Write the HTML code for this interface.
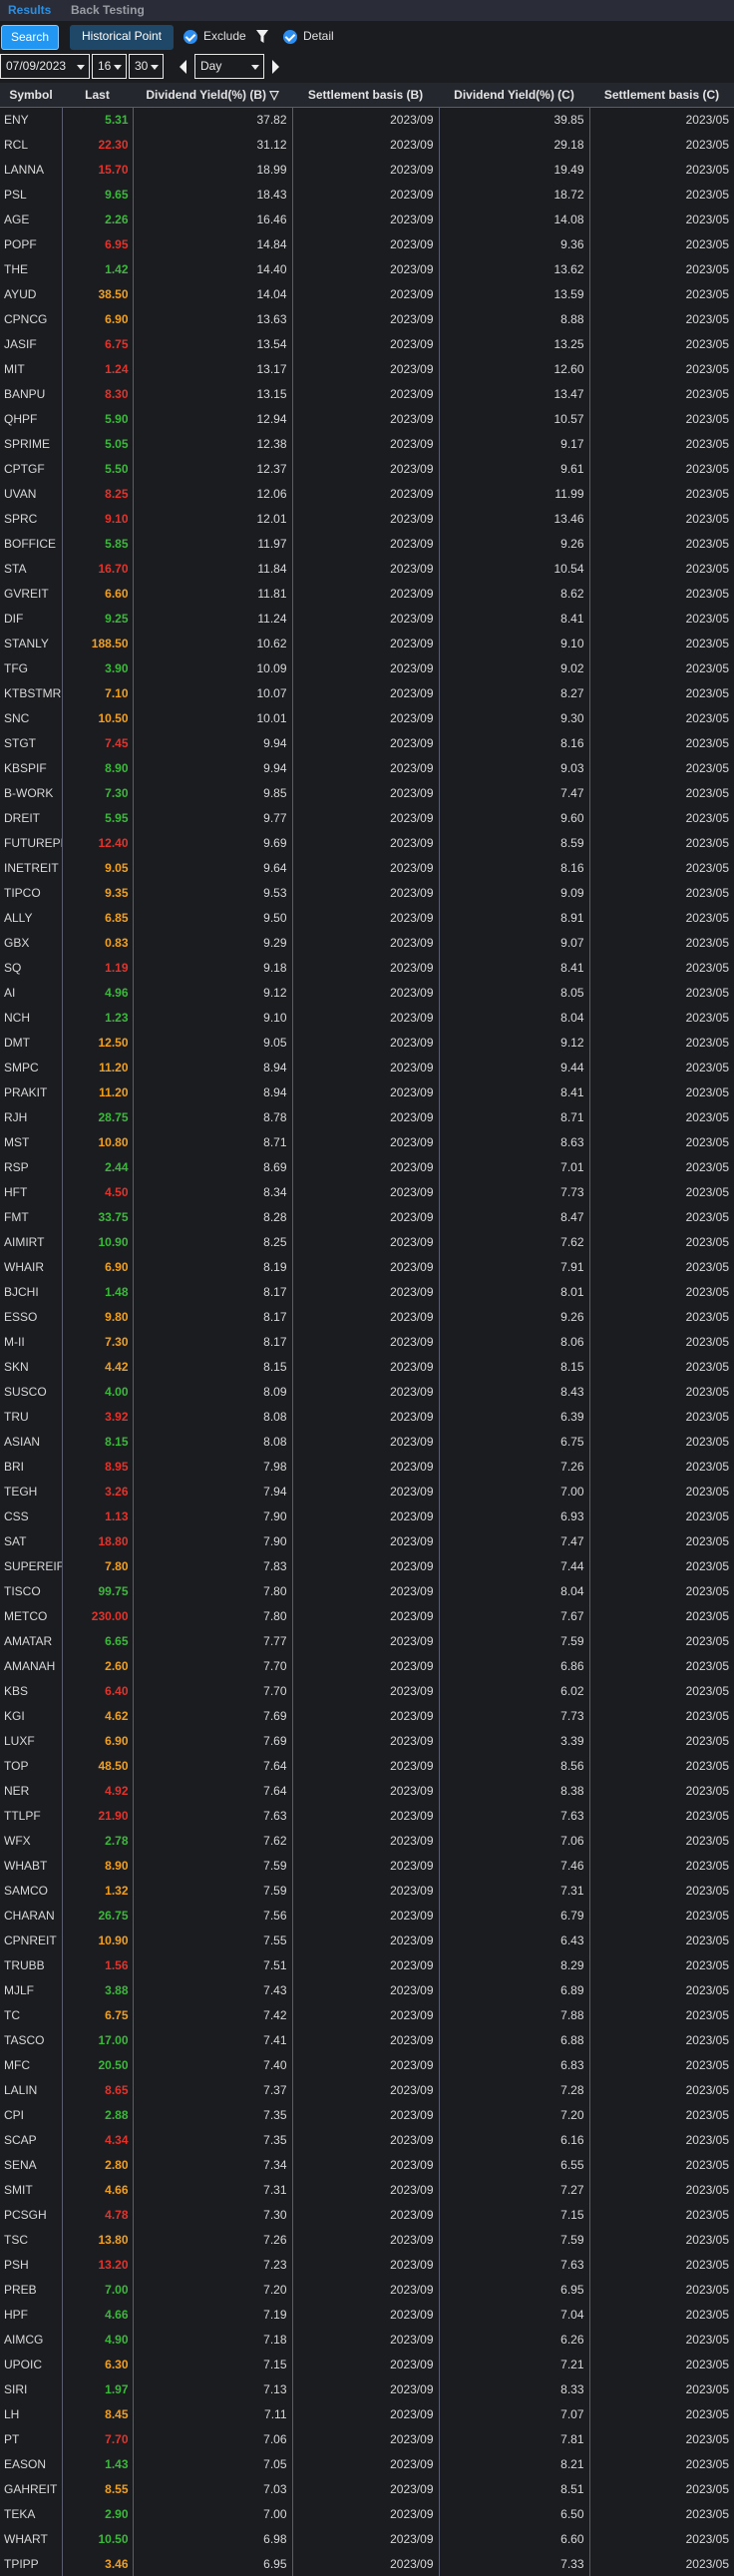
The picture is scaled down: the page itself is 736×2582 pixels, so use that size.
<!DOCTYPE html>
<html><head><meta charset="utf-8"><style>
*{margin:0;padding:0;box-sizing:border-box}
body{width:736px;height:2582px;background:#1b1c20;font-family:"Liberation Sans",sans-serif;color:#d8d8d8;overflow:hidden;position:relative}
.tabs{position:absolute;left:0;top:0;width:736px;height:21px;background:#2a2d38}
.tabs span{position:absolute;top:3px;font-size:12px;font-weight:bold}
.ctl{position:absolute;font-size:12px}
.btn{position:absolute;height:25px;line-height:23px;text-align:center;font-size:12px;color:#fff;border-radius:3px}
.chk{position:absolute;width:14px;height:14px;border-radius:50%;background:#2b8ef0}
.chk:after{content:"";position:absolute;left:4px;top:2px;width:4px;height:7px;border:solid #fff;border-width:0 2px 2px 0;transform:rotate(45deg)}
.sel{position:absolute;top:54px;height:25px;border:1px solid #e8e8e8;font-size:12px;line-height:23px;padding-left:5px;color:#e8e8e8}
.sel:after{content:"";position:absolute;right:4px;top:10px;border:4px solid transparent;border-top:5px solid #e8e8e8;border-bottom:0}
table{position:absolute;top:83px;left:0;width:736px;border-collapse:collapse;table-layout:fixed;font-size:12px}
th{height:24px;background:#25272e;color:#e4e4e4;font-weight:bold;text-align:center;white-space:nowrap;overflow:hidden}
td{height:25px;border-left:1px solid #5a5c70;text-align:right;padding-right:5px;white-space:nowrap;overflow:hidden}
td:first-child{border-left:0;text-align:left;padding-left:4px;padding-right:0}
tr.h+tr td{border-top:1px solid #5a5c70}
td:nth-child(2){font-weight:bold;padding-right:4px}
.g{color:#3cb83c}.r{color:#e0342c}.o{color:#f0a020}
</style></head><body>
<div class="tabs"><span style="left:8px;color:#2d8ee0">Results</span><span style="left:71px;color:#9a9ca4">Back Testing</span></div>
<div class="btn" style="left:1px;top:25px;width:58px;background:#2196f3;border:1px solid #8cc8ff">Search</div>
<div class="btn" style="left:70px;top:25px;width:104px;background:#1f4868">Historical Point</div>
<div class="chk" style="left:184px;top:30px"></div>
<div class="ctl" style="left:204px;top:29px;color:#e0e0e0">Exclude</div>
<svg style="position:absolute;left:257px;top:30px" width="12" height="14" viewBox="0 0 12 14"><path d="M0 0H12L7.5 6V13L4.5 11V6Z" fill="#f0f0f0"/></svg>
<div class="chk" style="left:284px;top:30px"></div>
<div class="ctl" style="left:304px;top:29px;color:#e0e0e0">Detail</div>
<div class="sel" style="left:0;width:90px">07/09/2023</div>
<div class="sel" style="left:92px;width:35px">16</div>
<div class="sel" style="left:129px;width:35px">30</div>
<svg style="position:absolute;left:180px;top:60px" width="8" height="14"><path d="M7 0V14L0 7Z" fill="#f0f0f0"/></svg>
<div class="sel" style="left:195px;width:70px">Day</div>
<svg style="position:absolute;left:273px;top:60px" width="8" height="14"><path d="M0 0V14L7 7Z" fill="#f0f0f0"/></svg>
<table>
<colgroup><col style="width:62px"><col style="width:71px"><col style="width:160px"><col style="width:147px"><col style="width:151px"><col style="width:145px"></colgroup>
<tr class="h"><th>Symbol</th><th>Last</th><th>Dividend Yield(%) (B) ▽</th><th>Settlement basis (B)</th><th>Dividend Yield(%) (C)</th><th>Settlement basis (C)</th></tr>
<tr><td>ENY</td><td class="g">5.31</td><td>37.82</td><td>2023/09</td><td>39.85</td><td>2023/05</td></tr>
<tr><td>RCL</td><td class="r">22.30</td><td>31.12</td><td>2023/09</td><td>29.18</td><td>2023/05</td></tr>
<tr><td>LANNA</td><td class="r">15.70</td><td>18.99</td><td>2023/09</td><td>19.49</td><td>2023/05</td></tr>
<tr><td>PSL</td><td class="g">9.65</td><td>18.43</td><td>2023/09</td><td>18.72</td><td>2023/05</td></tr>
<tr><td>AGE</td><td class="g">2.26</td><td>16.46</td><td>2023/09</td><td>14.08</td><td>2023/05</td></tr>
<tr><td>POPF</td><td class="r">6.95</td><td>14.84</td><td>2023/09</td><td>9.36</td><td>2023/05</td></tr>
<tr><td>THE</td><td class="g">1.42</td><td>14.40</td><td>2023/09</td><td>13.62</td><td>2023/05</td></tr>
<tr><td>AYUD</td><td class="o">38.50</td><td>14.04</td><td>2023/09</td><td>13.59</td><td>2023/05</td></tr>
<tr><td>CPNCG</td><td class="o">6.90</td><td>13.63</td><td>2023/09</td><td>8.88</td><td>2023/05</td></tr>
<tr><td>JASIF</td><td class="r">6.75</td><td>13.54</td><td>2023/09</td><td>13.25</td><td>2023/05</td></tr>
<tr><td>MIT</td><td class="r">1.24</td><td>13.17</td><td>2023/09</td><td>12.60</td><td>2023/05</td></tr>
<tr><td>BANPU</td><td class="r">8.30</td><td>13.15</td><td>2023/09</td><td>13.47</td><td>2023/05</td></tr>
<tr><td>QHPF</td><td class="g">5.90</td><td>12.94</td><td>2023/09</td><td>10.57</td><td>2023/05</td></tr>
<tr><td>SPRIME</td><td class="g">5.05</td><td>12.38</td><td>2023/09</td><td>9.17</td><td>2023/05</td></tr>
<tr><td>CPTGF</td><td class="g">5.50</td><td>12.37</td><td>2023/09</td><td>9.61</td><td>2023/05</td></tr>
<tr><td>UVAN</td><td class="r">8.25</td><td>12.06</td><td>2023/09</td><td>11.99</td><td>2023/05</td></tr>
<tr><td>SPRC</td><td class="r">9.10</td><td>12.01</td><td>2023/09</td><td>13.46</td><td>2023/05</td></tr>
<tr><td>BOFFICE</td><td class="g">5.85</td><td>11.97</td><td>2023/09</td><td>9.26</td><td>2023/05</td></tr>
<tr><td>STA</td><td class="r">16.70</td><td>11.84</td><td>2023/09</td><td>10.54</td><td>2023/05</td></tr>
<tr><td>GVREIT</td><td class="o">6.60</td><td>11.81</td><td>2023/09</td><td>8.62</td><td>2023/05</td></tr>
<tr><td>DIF</td><td class="g">9.25</td><td>11.24</td><td>2023/09</td><td>8.41</td><td>2023/05</td></tr>
<tr><td>STANLY</td><td class="o">188.50</td><td>10.62</td><td>2023/09</td><td>9.10</td><td>2023/05</td></tr>
<tr><td>TFG</td><td class="g">3.90</td><td>10.09</td><td>2023/09</td><td>9.02</td><td>2023/05</td></tr>
<tr><td>KTBSTMR</td><td class="o">7.10</td><td>10.07</td><td>2023/09</td><td>8.27</td><td>2023/05</td></tr>
<tr><td>SNC</td><td class="o">10.50</td><td>10.01</td><td>2023/09</td><td>9.30</td><td>2023/05</td></tr>
<tr><td>STGT</td><td class="r">7.45</td><td>9.94</td><td>2023/09</td><td>8.16</td><td>2023/05</td></tr>
<tr><td>KBSPIF</td><td class="g">8.90</td><td>9.94</td><td>2023/09</td><td>9.03</td><td>2023/05</td></tr>
<tr><td>B-WORK</td><td class="g">7.30</td><td>9.85</td><td>2023/09</td><td>7.47</td><td>2023/05</td></tr>
<tr><td>DREIT</td><td class="g">5.95</td><td>9.77</td><td>2023/09</td><td>9.60</td><td>2023/05</td></tr>
<tr><td>FUTUREPF</td><td class="r">12.40</td><td>9.69</td><td>2023/09</td><td>8.59</td><td>2023/05</td></tr>
<tr><td>INETREIT</td><td class="o">9.05</td><td>9.64</td><td>2023/09</td><td>8.16</td><td>2023/05</td></tr>
<tr><td>TIPCO</td><td class="o">9.35</td><td>9.53</td><td>2023/09</td><td>9.09</td><td>2023/05</td></tr>
<tr><td>ALLY</td><td class="o">6.85</td><td>9.50</td><td>2023/09</td><td>8.91</td><td>2023/05</td></tr>
<tr><td>GBX</td><td class="o">0.83</td><td>9.29</td><td>2023/09</td><td>9.07</td><td>2023/05</td></tr>
<tr><td>SQ</td><td class="r">1.19</td><td>9.18</td><td>2023/09</td><td>8.41</td><td>2023/05</td></tr>
<tr><td>AI</td><td class="g">4.96</td><td>9.12</td><td>2023/09</td><td>8.05</td><td>2023/05</td></tr>
<tr><td>NCH</td><td class="g">1.23</td><td>9.10</td><td>2023/09</td><td>8.04</td><td>2023/05</td></tr>
<tr><td>DMT</td><td class="o">12.50</td><td>9.05</td><td>2023/09</td><td>9.12</td><td>2023/05</td></tr>
<tr><td>SMPC</td><td class="o">11.20</td><td>8.94</td><td>2023/09</td><td>9.44</td><td>2023/05</td></tr>
<tr><td>PRAKIT</td><td class="o">11.20</td><td>8.94</td><td>2023/09</td><td>8.41</td><td>2023/05</td></tr>
<tr><td>RJH</td><td class="g">28.75</td><td>8.78</td><td>2023/09</td><td>8.71</td><td>2023/05</td></tr>
<tr><td>MST</td><td class="o">10.80</td><td>8.71</td><td>2023/09</td><td>8.63</td><td>2023/05</td></tr>
<tr><td>RSP</td><td class="g">2.44</td><td>8.69</td><td>2023/09</td><td>7.01</td><td>2023/05</td></tr>
<tr><td>HFT</td><td class="r">4.50</td><td>8.34</td><td>2023/09</td><td>7.73</td><td>2023/05</td></tr>
<tr><td>FMT</td><td class="g">33.75</td><td>8.28</td><td>2023/09</td><td>8.47</td><td>2023/05</td></tr>
<tr><td>AIMIRT</td><td class="g">10.90</td><td>8.25</td><td>2023/09</td><td>7.62</td><td>2023/05</td></tr>
<tr><td>WHAIR</td><td class="o">6.90</td><td>8.19</td><td>2023/09</td><td>7.91</td><td>2023/05</td></tr>
<tr><td>BJCHI</td><td class="g">1.48</td><td>8.17</td><td>2023/09</td><td>8.01</td><td>2023/05</td></tr>
<tr><td>ESSO</td><td class="o">9.80</td><td>8.17</td><td>2023/09</td><td>9.26</td><td>2023/05</td></tr>
<tr><td>M-II</td><td class="o">7.30</td><td>8.17</td><td>2023/09</td><td>8.06</td><td>2023/05</td></tr>
<tr><td>SKN</td><td class="o">4.42</td><td>8.15</td><td>2023/09</td><td>8.15</td><td>2023/05</td></tr>
<tr><td>SUSCO</td><td class="g">4.00</td><td>8.09</td><td>2023/09</td><td>8.43</td><td>2023/05</td></tr>
<tr><td>TRU</td><td class="r">3.92</td><td>8.08</td><td>2023/09</td><td>6.39</td><td>2023/05</td></tr>
<tr><td>ASIAN</td><td class="g">8.15</td><td>8.08</td><td>2023/09</td><td>6.75</td><td>2023/05</td></tr>
<tr><td>BRI</td><td class="r">8.95</td><td>7.98</td><td>2023/09</td><td>7.26</td><td>2023/05</td></tr>
<tr><td>TEGH</td><td class="r">3.26</td><td>7.94</td><td>2023/09</td><td>7.00</td><td>2023/05</td></tr>
<tr><td>CSS</td><td class="r">1.13</td><td>7.90</td><td>2023/09</td><td>6.93</td><td>2023/05</td></tr>
<tr><td>SAT</td><td class="r">18.80</td><td>7.90</td><td>2023/09</td><td>7.47</td><td>2023/05</td></tr>
<tr><td>SUPEREIF</td><td class="o">7.80</td><td>7.83</td><td>2023/09</td><td>7.44</td><td>2023/05</td></tr>
<tr><td>TISCO</td><td class="g">99.75</td><td>7.80</td><td>2023/09</td><td>8.04</td><td>2023/05</td></tr>
<tr><td>METCO</td><td class="r">230.00</td><td>7.80</td><td>2023/09</td><td>7.67</td><td>2023/05</td></tr>
<tr><td>AMATAR</td><td class="g">6.65</td><td>7.77</td><td>2023/09</td><td>7.59</td><td>2023/05</td></tr>
<tr><td>AMANAH</td><td class="o">2.60</td><td>7.70</td><td>2023/09</td><td>6.86</td><td>2023/05</td></tr>
<tr><td>KBS</td><td class="r">6.40</td><td>7.70</td><td>2023/09</td><td>6.02</td><td>2023/05</td></tr>
<tr><td>KGI</td><td class="o">4.62</td><td>7.69</td><td>2023/09</td><td>7.73</td><td>2023/05</td></tr>
<tr><td>LUXF</td><td class="o">6.90</td><td>7.69</td><td>2023/09</td><td>3.39</td><td>2023/05</td></tr>
<tr><td>TOP</td><td class="o">48.50</td><td>7.64</td><td>2023/09</td><td>8.56</td><td>2023/05</td></tr>
<tr><td>NER</td><td class="r">4.92</td><td>7.64</td><td>2023/09</td><td>8.38</td><td>2023/05</td></tr>
<tr><td>TTLPF</td><td class="r">21.90</td><td>7.63</td><td>2023/09</td><td>7.63</td><td>2023/05</td></tr>
<tr><td>WFX</td><td class="g">2.78</td><td>7.62</td><td>2023/09</td><td>7.06</td><td>2023/05</td></tr>
<tr><td>WHABT</td><td class="o">8.90</td><td>7.59</td><td>2023/09</td><td>7.46</td><td>2023/05</td></tr>
<tr><td>SAMCO</td><td class="o">1.32</td><td>7.59</td><td>2023/09</td><td>7.31</td><td>2023/05</td></tr>
<tr><td>CHARAN</td><td class="g">26.75</td><td>7.56</td><td>2023/09</td><td>6.79</td><td>2023/05</td></tr>
<tr><td>CPNREIT</td><td class="o">10.90</td><td>7.55</td><td>2023/09</td><td>6.43</td><td>2023/05</td></tr>
<tr><td>TRUBB</td><td class="r">1.56</td><td>7.51</td><td>2023/09</td><td>8.29</td><td>2023/05</td></tr>
<tr><td>MJLF</td><td class="g">3.88</td><td>7.43</td><td>2023/09</td><td>6.89</td><td>2023/05</td></tr>
<tr><td>TC</td><td class="o">6.75</td><td>7.42</td><td>2023/09</td><td>7.88</td><td>2023/05</td></tr>
<tr><td>TASCO</td><td class="g">17.00</td><td>7.41</td><td>2023/09</td><td>6.88</td><td>2023/05</td></tr>
<tr><td>MFC</td><td class="g">20.50</td><td>7.40</td><td>2023/09</td><td>6.83</td><td>2023/05</td></tr>
<tr><td>LALIN</td><td class="r">8.65</td><td>7.37</td><td>2023/09</td><td>7.28</td><td>2023/05</td></tr>
<tr><td>CPI</td><td class="g">2.88</td><td>7.35</td><td>2023/09</td><td>7.20</td><td>2023/05</td></tr>
<tr><td>SCAP</td><td class="r">4.34</td><td>7.35</td><td>2023/09</td><td>6.16</td><td>2023/05</td></tr>
<tr><td>SENA</td><td class="o">2.80</td><td>7.34</td><td>2023/09</td><td>6.55</td><td>2023/05</td></tr>
<tr><td>SMIT</td><td class="o">4.66</td><td>7.31</td><td>2023/09</td><td>7.27</td><td>2023/05</td></tr>
<tr><td>PCSGH</td><td class="r">4.78</td><td>7.30</td><td>2023/09</td><td>7.15</td><td>2023/05</td></tr>
<tr><td>TSC</td><td class="o">13.80</td><td>7.26</td><td>2023/09</td><td>7.59</td><td>2023/05</td></tr>
<tr><td>PSH</td><td class="r">13.20</td><td>7.23</td><td>2023/09</td><td>7.63</td><td>2023/05</td></tr>
<tr><td>PREB</td><td class="g">7.00</td><td>7.20</td><td>2023/09</td><td>6.95</td><td>2023/05</td></tr>
<tr><td>HPF</td><td class="g">4.66</td><td>7.19</td><td>2023/09</td><td>7.04</td><td>2023/05</td></tr>
<tr><td>AIMCG</td><td class="g">4.90</td><td>7.18</td><td>2023/09</td><td>6.26</td><td>2023/05</td></tr>
<tr><td>UPOIC</td><td class="o">6.30</td><td>7.15</td><td>2023/09</td><td>7.21</td><td>2023/05</td></tr>
<tr><td>SIRI</td><td class="g">1.97</td><td>7.13</td><td>2023/09</td><td>8.33</td><td>2023/05</td></tr>
<tr><td>LH</td><td class="o">8.45</td><td>7.11</td><td>2023/09</td><td>7.07</td><td>2023/05</td></tr>
<tr><td>PT</td><td class="r">7.70</td><td>7.06</td><td>2023/09</td><td>7.81</td><td>2023/05</td></tr>
<tr><td>EASON</td><td class="g">1.43</td><td>7.05</td><td>2023/09</td><td>8.21</td><td>2023/05</td></tr>
<tr><td>GAHREIT</td><td class="o">8.55</td><td>7.03</td><td>2023/09</td><td>8.51</td><td>2023/05</td></tr>
<tr><td>TEKA</td><td class="g">2.90</td><td>7.00</td><td>2023/09</td><td>6.50</td><td>2023/05</td></tr>
<tr><td>WHART</td><td class="g">10.50</td><td>6.98</td><td>2023/09</td><td>6.60</td><td>2023/05</td></tr>
<tr><td>TPIPP</td><td class="o">3.46</td><td>6.95</td><td>2023/09</td><td>7.33</td><td>2023/05</td></tr>
</table>
</body></html>
